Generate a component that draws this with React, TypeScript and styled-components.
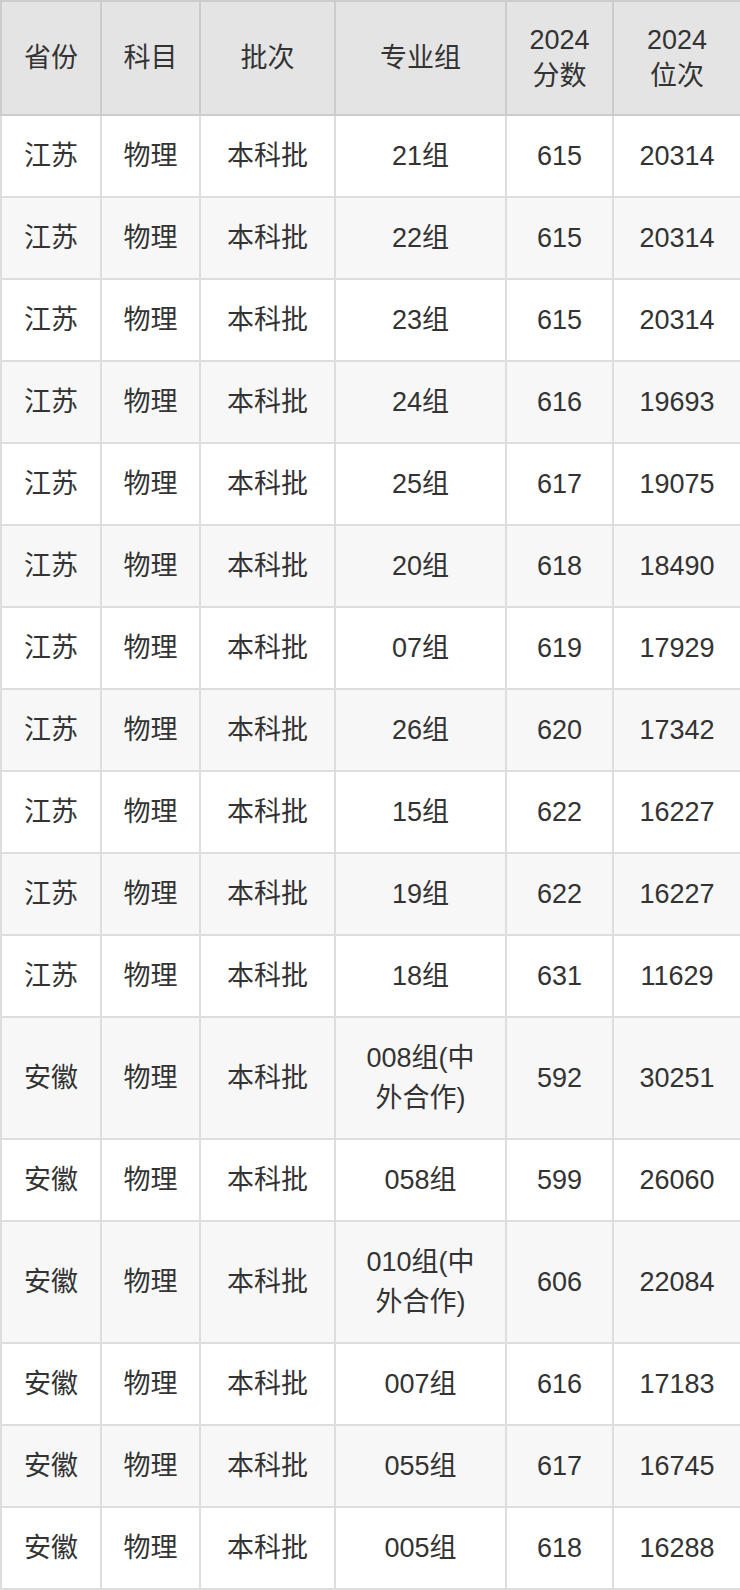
import styled, { createGlobalStyle } from "styled-components";

type Row = {
  province: string;
  subject: string;
  batch: string;
  group: string;
  score: string;
  rank: string;
};

const GlobalStyle = createGlobalStyle`
  html, body {
    margin: 0;
    padding: 0;
    background: #ffffff;
  }
  body {
    font-family: "Liberation Sans", "Noto Sans CJK SC", Arial, sans-serif;
    color: #333333;
  }
`;

const jiangsu: [string, string, string][] = [
  ["21组", "615", "20314"],
  ["22组", "615", "20314"],
  ["23组", "615", "20314"],
  ["24组", "616", "19693"],
  ["25组", "617", "19075"],
  ["20组", "618", "18490"],
  ["07组", "619", "17929"],
  ["26组", "620", "17342"],
  ["15组", "622", "16227"],
  ["19组", "622", "16227"],
  ["18组", "631", "11629"],
];

const anhui: [string, string, string][] = [
  ["008组(中外合作)", "592", "30251"],
  ["058组", "599", "26060"],
  ["010组(中外合作)", "606", "22084"],
  ["007组", "616", "17183"],
  ["055组", "617", "16745"],
  ["005组", "618", "16288"],
];

const rows: Row[] = [
  ...jiangsu.map(([group, score, rank]) => ({
    province: "江苏",
    subject: "物理",
    batch: "本科批",
    group,
    score,
    rank,
  })),
  ...anhui.map(([group, score, rank]) => ({
    province: "安徽",
    subject: "物理",
    batch: "本科批",
    group,
    score,
    rank,
  })),
];

const widths = [100, 99, 135, 171, 107, 128];

const Table = styled.table`
  width: 740px;
  border-collapse: collapse;
  table-layout: fixed;
  font-size: 27px;
`;

const HeadCell = styled.th`
  background: #e4e4e4;
  border: 2px solid #cccccc;
  font-weight: normal;
  padding: 20px 6px;
  line-height: 36px;
  text-align: center;
  vertical-align: middle;
  color: #333333;
`;

const BodyRow = styled.tr<{ $striped: boolean }>`
  background: ${(p) => (p.$striped ? "#f7f7f7" : "#ffffff")};
`;

const Cell = styled.td`
  border: 2px solid #dddddd;
  padding: 20px 20px;
  line-height: 40px;
  height: 40px;
  text-align: center;
  vertical-align: middle;
  color: #333333;
  word-break: break-all;
`;

const App = () => {
  return (
    <>
      <GlobalStyle />
      <Table>
        <colgroup>
          {widths.map((w, i) => (
            <col key={i} style={{ width: w }} />
          ))}
        </colgroup>
        <thead>
          <tr>
            <HeadCell>省份</HeadCell>
            <HeadCell>科目</HeadCell>
            <HeadCell>批次</HeadCell>
            <HeadCell>专业组</HeadCell>
            <HeadCell>
              2024
              <br />
              分数
            </HeadCell>
            <HeadCell>
              2024
              <br />
              位次
            </HeadCell>
          </tr>
        </thead>
        <tbody>
          {rows.map((r, i) => (
            <BodyRow key={i} $striped={i % 2 === 1}>
              <Cell>{r.province}</Cell>
              <Cell>{r.subject}</Cell>
              <Cell>{r.batch}</Cell>
              <Cell>{r.group}</Cell>
              <Cell>{r.score}</Cell>
              <Cell>{r.rank}</Cell>
            </BodyRow>
          ))}
        </tbody>
      </Table>
    </>
  );
};

export default App;
